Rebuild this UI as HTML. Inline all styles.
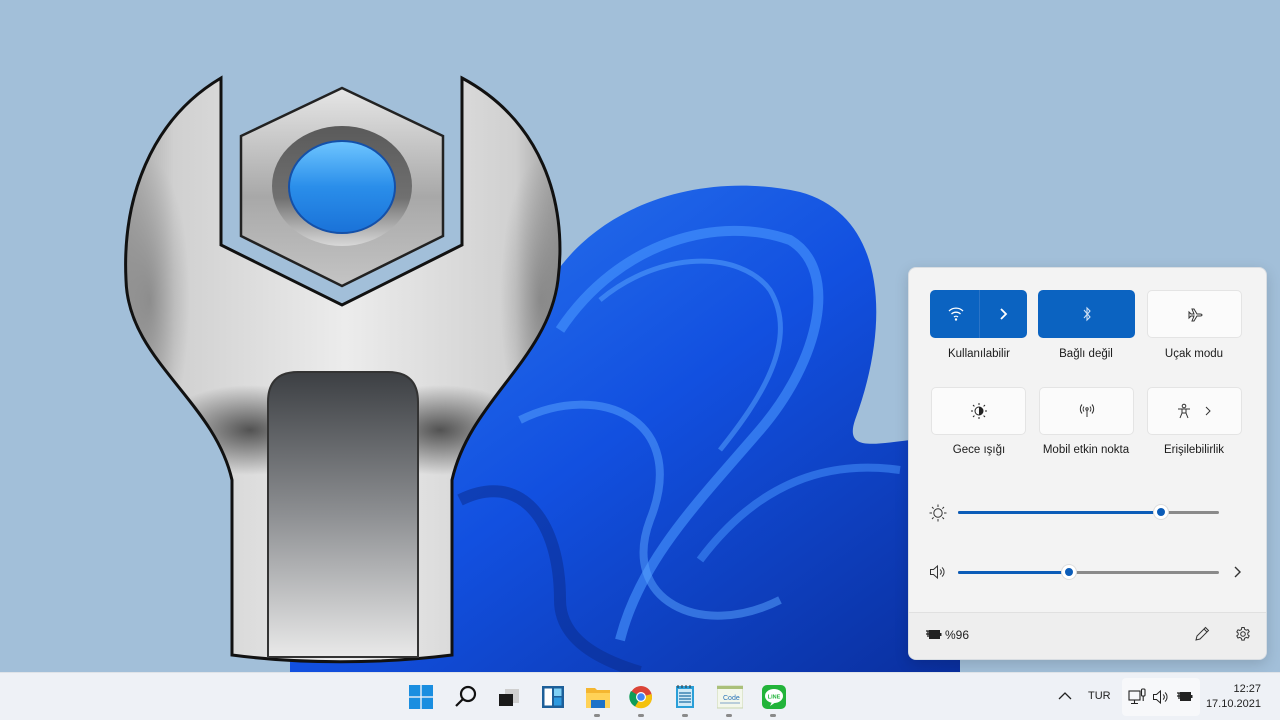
<!DOCTYPE html>
<html><head><meta charset="utf-8"><style>
*{margin:0;padding:0;box-sizing:border-box}
body{width:1280px;height:720px;overflow:hidden;background:#a2bfd9;font-family:"Segoe UI","Liberation Sans",sans-serif;position:relative}
.abs{position:absolute}
#panel{left:908px;top:267px;width:359px;height:393px;background:#f3f3f3;border:1px solid #d8dde2;border-radius:8px;overflow:hidden;box-shadow:0 4px 14px rgba(0,0,0,.15)}
.tile{position:absolute;height:48px;border-radius:5px;background:#fbfbfb;border:1px solid #e4e4e4;display:flex;align-items:center;justify-content:center}
.tile.on{background:#0b63c1;border-color:#0b63c1}
.lbl{position:absolute;font-size:11.5px;color:#1b1b1b;text-align:center;width:110px}
.track{position:absolute;height:3px;background:#8a8a8a;border-radius:2px}
.fill{position:absolute;height:3px;background:#0b5cb8;border-radius:2px}
.thumb{position:absolute;width:14px;height:14px;border-radius:50%;background:#0b5cb8;border:3px solid #fff;box-shadow:0 0 0 1px #ddd}
#foot{position:absolute;left:0;top:344px;width:100%;height:49px;background:#eeeeee;border-top:1px solid #e0e0e0}
#taskbar{left:0;top:672px;width:1280px;height:48px;background:#eef1f6;border-top:1px solid #dfe3e8}
.dot{position:absolute;top:41px;width:6px;height:3px;border-radius:2px;background:#8a8a8a}
</style></head><body>

<svg class="abs" style="left:0;top:0" width="1280" height="672" viewBox="0 0 1280 672">
<defs>
<linearGradient id="bl" x1="0" y1="0" x2="1" y2="1"><stop offset="0" stop-color="#2e7cf0"/><stop offset=".5" stop-color="#1250e0"/><stop offset="1" stop-color="#0a2f9e"/></linearGradient>
<linearGradient id="met" x1="0" y1="0" x2="1" y2="0"><stop offset="0" stop-color="#9a9a9a"/><stop offset=".12" stop-color="#d0d0d0"/><stop offset=".5" stop-color="#ececec"/><stop offset=".88" stop-color="#d0d0d0"/><stop offset="1" stop-color="#8e8e8e"/></linearGradient>
<radialGradient id="shd" cx=".5" cy=".5" r=".5"><stop offset="0" stop-color="#3a3a3a" stop-opacity=".85"/><stop offset="1" stop-color="#3a3a3a" stop-opacity="0"/></radialGradient>
<linearGradient id="slot" x1="0" y1="0" x2="0" y2="1"><stop offset="0" stop-color="#3c3f43"/><stop offset=".5" stop-color="#8d8f92"/><stop offset="1" stop-color="#e9e9e9"/></linearGradient>
<linearGradient id="hex" x1="0" y1="0" x2="0" y2="1"><stop offset="0" stop-color="#e6e6e6"/><stop offset=".55" stop-color="#a8a8a8"/><stop offset="1" stop-color="#c4c4c4"/></linearGradient>
<linearGradient id="ring" x1="0" y1="0" x2="0" y2="1"><stop offset="0" stop-color="#5a5a5a"/><stop offset=".6" stop-color="#707070"/><stop offset="1" stop-color="#d8d8d8"/></linearGradient>
<linearGradient id="blue" x1="0" y1="0" x2="0" y2="1"><stop offset="0" stop-color="#6fc6ff"/><stop offset=".5" stop-color="#2a8eea"/><stop offset="1" stop-color="#1a72d8"/></linearGradient>
<clipPath id="wc"><path d="M221,78 L221,245 L342,305 L462,245 L462,78 C540,120 568,200 558,280 C548,360 470,400 452,480 L452,655 C380,664 300,664 232,655 L232,480 C214,400 128,360 126,280 C122,200 150,120 221,78 Z"/></clipPath>
</defs>
<!-- bloom -->
<path d="M540,300 C585,205 700,170 800,192 C885,215 892,320 855,420 C845,450 870,445 910,440 L960,440 L960,672 L290,672 L290,420 Z" fill="url(#bl)"/>
<path d="M560,330 C620,240 720,215 790,240 C840,270 820,360 760,430 C700,500 640,560 620,640" fill="none" stroke="#4a97ff" stroke-width="10" opacity=".6"/>
<path d="M600,300 C660,250 740,250 770,290 C800,340 760,400 720,450" fill="none" stroke="#5aa8ff" stroke-width="5" opacity=".5"/>
<path d="M520,420 C600,380 690,420 650,520 C620,600 700,640 780,600" fill="none" stroke="#5aa5ff" stroke-width="8" opacity=".5"/>
<path d="M460,500 C520,470 560,520 560,600 C560,640 600,660 640,672" fill="none" stroke="#0a2a8a" stroke-width="12" opacity=".5"/>
<path d="M700,560 C760,480 830,460 900,470" fill="none" stroke="#4a97ff" stroke-width="8" opacity=".5"/>
<!-- wrench -->
<g clip-path="url(#wc)">
<rect x="120" y="70" width="450" height="600" fill="url(#met)"/>
<ellipse cx="250" cy="430" rx="90" ry="45" fill="url(#shd)"/>
<ellipse cx="440" cy="430" rx="90" ry="45" fill="url(#shd)"/>
<ellipse cx="150" cy="300" rx="40" ry="140" fill="url(#shd)" opacity=".4"/>
<ellipse cx="540" cy="300" rx="40" ry="140" fill="url(#shd)" opacity=".4"/>
</g>
<path d="M221,78 L221,245 L342,305 L462,245 L462,78 C540,120 568,200 558,280 C548,360 470,400 452,480 L452,655 C380,664 300,664 232,655 L232,480 C214,400 128,360 126,280 C122,200 150,120 221,78 Z" fill="none" stroke="#111" stroke-width="3"/>
<path d="M342,88 L443,136 L443,236 L342,286 L241,236 L241,136 Z" fill="url(#hex)" stroke="#222" stroke-width="2.5"/>
<ellipse cx="342" cy="186" rx="70" ry="60" fill="url(#ring)"/>
<ellipse cx="342" cy="187" rx="53" ry="46" fill="url(#blue)" stroke="#1450a8" stroke-width="2"/>
<path d="M268,402 Q268,372 298,372 L388,372 Q418,372 418,402 L418,657 L268,657 Z" fill="url(#slot)" stroke="#333" stroke-width="2"/>
</svg>

<div id="panel" class="abs">
  <div class="tile on" style="left:21px;top:22px;width:97px"><svg width="97" height="48"><g fill="none" stroke="#fff" stroke-width="1.3"><path d="M18,21 a10,10 0 0 1 14,0"/><path d="M20.5,24 a6.5,6.5 0 0 1 9,0"/><path d="M23,27 a3,3 0 0 1 4,0"/></g><circle cx="25" cy="29.5" r="1.2" fill="#fff"/><line x1="48.5" y1="0" x2="48.5" y2="48" stroke="#2a74c8"/><path d="M70,19 L75,24 L70,29" fill="none" stroke="#fff" stroke-width="1.8"/></svg></div>
  <div class="tile on" style="left:129px;top:22px;width:97px"><svg width="12" height="16"><path d="M3,4 L9,11 L6,14 L6,2 L9,5 L3,12" fill="none" stroke="#cfe0f5" stroke-width="1.1"/></svg></div>
  <div class="tile" style="left:238px;top:22px;width:95px"><svg width="16" height="16"><path d="M2,6 L4,8 L7,8 L5,3 L7,3 L10,8 L13,8 Q15,8 15,9 Q15,10 13,10 L10,10 L7,15 L5,15 L7,10 L4,10 L2,12 Z" fill="none" stroke="#333" stroke-width="1"/></svg></div>
  <div class="lbl" style="left:15px;top:80px">Kullanılabilir</div>
  <div class="lbl" style="left:122px;top:80px">Bağlı değil</div>
  <div class="lbl" style="left:230px;top:80px">Uçak modu</div>

  <div class="tile" style="left:22px;top:119px;width:95px"><svg width="16" height="16"><circle cx="8" cy="8" r="4" fill="none" stroke="#222"/><path d="M8,4 A4,4 0 0 1 8,12 Z" fill="#222"/><g stroke="#222" stroke-width="1"><path d="M8,0v2M8,14v2M0,8h2M14,8h2M2,2l1.4,1.4M12.6,12.6l1.4,1.4M2,14l1.4-1.4M12.6,3.4L14,2"/></g></svg></div>
  <div class="tile" style="left:130px;top:119px;width:95px"><svg width="16" height="16" fill="none" stroke="#333" stroke-width="1"><circle cx="8" cy="6" r="1.2"/><path d="M8,7v7"/><path d="M5,3.5a4,4 0 0 0 0,5M11,3.5a4,4 0 0 1 0,5M3,1.5a7,7 0 0 0 0,9M13,1.5a7,7 0 0 1 0,9"/></svg></div>
  <div class="tile" style="left:238px;top:119px;width:95px"><svg width="40" height="16" fill="none" stroke="#333" stroke-width="1"><circle cx="9" cy="3" r="1.8"/><path d="M3,6 L15,6 M7,6 L7,10 L5,15 M11,6 L11,10 L13,15 M7,10 L11,10"/><path d="M31,4 L35,8 L31,12"/></svg></div>
  <div class="lbl" style="left:15px;top:176px">Gece ışığı</div>
  <div class="lbl" style="left:122px;top:176px">Mobil etkin nokta</div>
  <div class="lbl" style="left:230px;top:176px">Erişilebilirlik</div>

  <svg class="abs" style="left:20px;top:236px" width="18" height="18" fill="none" stroke="#333" stroke-width="1"><circle cx="9" cy="9" r="4.2"/><path d="M9,0.5v2.5M9,15v2.5M0.5,9h2.5M15,9h2.5M3,3l1.6,1.6M13.4,13.4L15,15M3,15l1.6-1.6M13.4,4.6L15,3"/></svg>
  <div class="track" style="left:49px;top:243px;width:261px"></div>
  <div class="fill" style="left:49px;top:243px;width:203px"></div>
  <div class="thumb" style="left:245px;top:237px"></div>

  <svg class="abs" style="left:20px;top:296px" width="18" height="16" fill="none" stroke="#333" stroke-width="1"><path d="M1.5,5.5h3l4-3.5v12l-4-3.5h-3z"/><path d="M11,5.5a3,3 0 0 1 0,5M13,3.5a6,6 0 0 1 0,9"/></svg>
  <div class="track" style="left:49px;top:303px;width:261px"></div>
  <div class="fill" style="left:49px;top:303px;width:111px"></div>
  <div class="thumb" style="left:153px;top:297px"></div>
  <svg class="abs" style="left:323px;top:297px" width="12" height="14"><path d="M3,2 L8,7 L3,12" fill="none" stroke="#333" stroke-width="1.4"/></svg>

  <div id="foot">
    <svg class="abs" style="left:16px;top:15px" width="18" height="14"><path d="M1,3h3M1,6h3M3,3v6" stroke="#222" stroke-width="1.3" fill="none"/><rect x="4.5" y="2.5" width="10" height="8" fill="#222" stroke="#222"/><rect x="15" y="5" width="1.5" height="3" fill="#222"/></svg>
    <div class="abs" style="left:36px;top:15px;font-size:12px;color:#222">%96</div>
    <svg class="abs" style="left:285px;top:13px" width="16" height="16" fill="none" stroke="#333" stroke-width="1"><path d="M2,14 L3,10 L11.5,1.5 L14.5,4.5 L6,13 Z M10,3 L13,6"/></svg>
    <svg class="abs" style="left:326px;top:13px" width="16" height="16" fill="none" stroke="#333" stroke-width="1"><circle cx="8" cy="8" r="2.3"/><path d="M6.8,1.5h2.4l.4,1.8 1.6.9 1.8-.6 1.2 2.1-1.4 1.2v1.8l1.4 1.2-1.2 2.1-1.8-.6-1.6.9-.4 1.8H6.8l-.4-1.8-1.6-.9-1.8.6-1.2-2.1 1.4-1.2V7.1L1.8,5.9 3,3.8l1.8.6 1.6-.9z"/></svg>
  </div>
</div>

<div id="taskbar" class="abs">
  <svg class="abs" style="left:409px;top:12px" width="24" height="24"><g fill="#1a8ee0"><rect x="0" y="0" width="11.3" height="11.3"/><rect x="12.7" y="0" width="11.3" height="11.3"/><rect x="0" y="12.7" width="11.3" height="11.3"/><rect x="12.7" y="12.7" width="11.3" height="11.3"/></g></svg>
  <svg class="abs" style="left:454px;top:12px" width="24" height="24" fill="none" stroke="#111" stroke-width="2.2"><circle cx="14" cy="9" r="7"/><path d="M9,14 L2,21"/></svg>
  <svg class="abs" style="left:497px;top:14px" width="24" height="22"><rect x="8" y="2" width="14" height="14" fill="#cfcfcf"/><rect x="2" y="7" width="14" height="12" fill="#1a1a1a"/></svg>
  <svg class="abs" style="left:541px;top:12px" width="24" height="24"><rect x="1" y="1" width="22" height="22" fill="#1d5f99"/><rect x="3.5" y="3.5" width="7.5" height="17" fill="#fff"/><rect x="13" y="3.5" width="7.5" height="7.5" fill="#7fd0f5"/><rect x="13" y="12.5" width="7.5" height="8" fill="#2d9ae0"/></svg>
  <svg class="abs" style="left:585px;top:12px" width="26" height="24"><path d="M1,3h9l2,2h13v18H1z" fill="#f4b630"/><rect x="1" y="8" width="24" height="15" fill="#ffd257"/><rect x="6" y="15" width="14" height="8" fill="#1e72c8"/></svg>
  <div class="dot" style="left:594px"></div>
  <svg class="abs" style="left:629px;top:12px" width="24" height="24"><circle cx="12" cy="12" r="11" fill="#db4437"/><path d="M12,12 L22.5,9 A11,11 0 0 1 6,21.5 Z" fill="#f4c20d"/><path d="M12,12 L6,21.5 A11,11 0 0 1 2,6 Z" fill="#0f9d58"/><circle cx="12" cy="12" r="5" fill="#fff"/><circle cx="12" cy="12" r="3.8" fill="#4285f4"/></svg>
  <div class="dot" style="left:638px"></div>
  <svg class="abs" style="left:675px;top:10px" width="20" height="26"><rect x="1" y="3" width="18" height="22" fill="#2a9fd8"/><rect x="3" y="6" width="14" height="17" fill="#cfeaf7"/><g stroke="#1d6fa5" stroke-width="1.3"><path d="M4,10h12M4,13h12M4,16h12M4,19h12"/></g><path d="M3,2v3M7,2v3M11,2v3M15,2v3" stroke="#333"/></svg>
  <div class="dot" style="left:682px"></div>
  <svg class="abs" style="left:717px;top:12px" width="26" height="24"><rect x="0" y="1" width="26" height="22" fill="#f3f7ec" stroke="#c9d6b0"/><rect x="0" y="1" width="26" height="3" fill="#aac07a"/><text x="6" y="15" font-size="7" font-family="Liberation Sans" fill="#2a73b8">Code</text><path d="M3,18h20" stroke="#7fa3c8"/></svg>
  <div class="dot" style="left:726px"></div>
  <svg class="abs" style="left:762px;top:12px" width="24" height="24"><rect x="0" y="0" width="24" height="24" rx="5" fill="#22b43a"/><ellipse cx="12" cy="11" rx="9" ry="7" fill="#fff"/><path d="M10,17 L8,21 L14,17Z" fill="#fff"/><text x="12" y="13.5" font-size="5.5" font-weight="bold" text-anchor="middle" font-family="Liberation Sans" fill="#22b43a">LINE</text></svg>
  <div class="dot" style="left:770px"></div>

  <svg class="abs" style="left:1058px;top:18px" width="14" height="10"><path d="M1,8 L7,2 L13,8" fill="none" stroke="#222" stroke-width="1.3"/></svg>
  <div class="abs" style="left:1088px;top:17px;font-size:11px;color:#222">TUR</div>
  <div class="abs" style="left:1122px;top:5px;width:78px;height:38px;background:#f7f8fa;border-radius:4px"></div>
  <svg class="abs" style="left:1128px;top:15px" width="20" height="18" fill="none" stroke="#222" stroke-width="1.1"><rect x="1" y="3" width="11" height="9"/><path d="M6.5,12v3M3,15.5h7"/><rect x="13.5" y="1" width="3.5" height="7" rx="1"/><path d="M15.2,8v5"/></svg>
  <svg class="abs" style="left:1152px;top:16px" width="18" height="16" fill="none" stroke="#222" stroke-width="1"><path d="M1.5,5.5h3l4-3.5v12l-4-3.5h-3z"/><path d="M11,5.5a3,3 0 0 1 0,5M13,3.5a6,6 0 0 1 0,9"/></svg>
  <svg class="abs" style="left:1176px;top:17px" width="18" height="14"><path d="M1,3h3M1,6h3M3,3v6" stroke="#222" stroke-width="1.3" fill="none"/><rect x="4.5" y="2.5" width="10" height="8" fill="#222" stroke="#222"/><rect x="15" y="5" width="1.5" height="3" fill="#222"/></svg>
  <div class="abs" style="left:1205px;top:9px;width:56px;text-align:right;font-size:11px;color:#222;line-height:15px">12:27<br>17.10.2021</div>
</div>
</body></html>
